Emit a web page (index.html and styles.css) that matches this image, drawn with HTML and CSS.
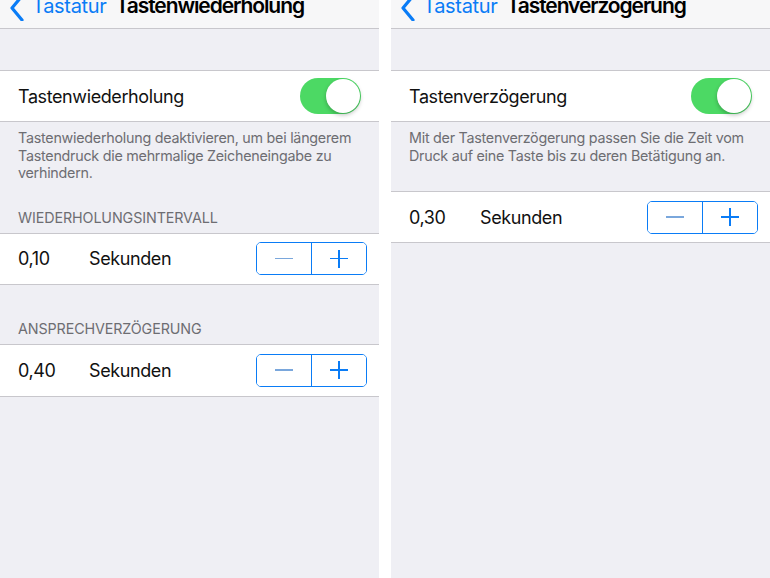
FILE: index.html
```html
<!DOCTYPE html>
<html lang="de">
<head>
  <meta charset="UTF-8" />
  <meta name="viewport" content="width=device-width, initial-scale=1" />
  <title>Tastatur</title>
  <link rel="stylesheet" href="styles.css">
</head>
<body>

  <!-- Bildschirm 1: Tastenwiederholung -->
  <div class="screen">
    <div class="nav">
      <a class="back" href="#">
        <svg class="chevron" width="16" height="26" viewBox="0 0 16 26">
          <path d="M13 1 L3 13 L13 25" fill="none" stroke="#0a7cf6" stroke-width="3.2" stroke-linecap="round" stroke-linejoin="round"/>
        </svg>
        <span>Tastatur</span>
      </a>
      <span class="title">Tastenwiederholung</span>
    </div>

    <div class="group first">
      <div class="row">
        <span class="label">Tastenwiederholung</span>
        <span class="switch on"><span class="knob"></span></span>
      </div>
    </div>
    <p class="footer">Tastenwiederholung deaktivieren, um bei längerem Tastendruck die mehrmalige Zeicheneingabe zu verhindern.</p>

    <div class="header">Wiederholungsintervall</div>
    <div class="group">
      <div class="row">
        <span class="value">0,10</span>
        <span class="unit">Sekunden</span>
        <span class="stepper">
          <button class="minus"><i></i></button>
          <button class="plus"><i></i></button>
        </span>
      </div>
    </div>

    <div class="header spaced">Ansprechverzögerung</div>
    <div class="group">
      <div class="row">
        <span class="value">0,40</span>
        <span class="unit">Sekunden</span>
        <span class="stepper">
          <button class="minus"><i></i></button>
          <button class="plus"><i></i></button>
        </span>
      </div>
    </div>
  </div>

  <!-- Bildschirm 2: Tastenverzögerung -->
  <div class="screen">
    <div class="nav">
      <a class="back" href="#">
        <svg class="chevron" width="16" height="26" viewBox="0 0 16 26">
          <path d="M13 1 L3 13 L13 25" fill="none" stroke="#0a7cf6" stroke-width="3.2" stroke-linecap="round" stroke-linejoin="round"/>
        </svg>
        <span>Tastatur</span>
      </a>
      <span class="title">Tastenverzögerung</span>
    </div>

    <div class="group first">
      <div class="row">
        <span class="label">Tastenverzögerung</span>
        <span class="switch on"><span class="knob"></span></span>
      </div>
    </div>
    <p class="footer">Mit der Tastenverzögerung passen Sie die Zeit vom Druck auf eine Taste bis zu deren Betätigung an.</p>

    <div class="group">
      <div class="row">
        <span class="value">0,30</span>
        <span class="unit">Sekunden</span>
        <span class="stepper">
          <button class="minus"><i></i></button>
          <button class="plus"><i></i></button>
        </span>
      </div>
    </div>
  </div>

</body>
</html>
```

FILE: styles.css
```css
/* zwei Einstellungs-Bildschirme nebeneinander */
body {
  margin: 0;
  background: #fff;
  display: flex;
  gap: 12px;
  font-family: Inter, "Liberation Sans", sans-serif;
  color: #111;
  overflow: hidden;
}

.screen {
  width: 379px;
  height: 578px;
  background: #efeff4;
  overflow: hidden;
}

/* Navigationsleiste, oben abgeschnitten */
.nav {
  height: 28px;
  background: #f7f7f8;
  border-bottom: 1px solid #c8c7cc;
  display: flex;
  align-items: flex-end;
  gap: 9px;
  padding-left: 9px;
  overflow: hidden;
}
.back {
  display: flex;
  align-items: flex-end;
  gap: 7px;
  color: #0a7cf6;
  text-decoration: none;
  font-size: 20px;
  line-height: 24px;
  letter-spacing: -0.3px;
  margin-bottom: 10px;
}
.back .chevron {
  margin-bottom: -3px;
}
.title {
  font-size: 21px;
  font-weight: 600;
  line-height: 24px;
  letter-spacing: -1.1px;
  margin-bottom: 10px;
  color: #000;
}

/* Gruppen und Zeilen */
.group {
  background: #fff;
  border-top: 1px solid #c8c7cc;
  border-bottom: 1px solid #c8c7cc;
}
.group.first {
  margin-top: 41px;
}
.row {
  height: 50px;
  display: flex;
  align-items: center;
  padding: 0 12px 0 18px;
  font-size: 18px;
  letter-spacing: -0.4px;
}
.label {
  flex: 1;
}
.value {
  width: 71px;
}
.unit {
  flex: 1;
}

.footer {
  margin: 0 0 27px;
  padding: 7px 18px 0;
  font-size: 14.3px;
  line-height: 17.5px;
  letter-spacing: -0.25px;
  color: #6d6d72;
}

.header {
  padding: 0 18px 6px;
  font-size: 14.3px;
  line-height: 18px;
  letter-spacing: -0.1px;
  color: #6d6d72;
  text-transform: uppercase;
}
.header.spaced {
  margin-top: 35px;
}
.header.spaced + .group .row {
  height: 51px;
}

/* Schalter */
.switch {
  width: 61px;
  height: 36px;
  border-radius: 18px;
  background: #4cd964;
  position: relative;
  margin-right: 6px;
}
.switch .knob {
  position: absolute;
  top: 1px;
  right: 1px;
  width: 34px;
  height: 34px;
  border-radius: 50%;
  background: #fff;
  box-shadow: 0 2px 4px rgba(0, 0, 0, 0.25);
}

/* Plus/Minus-Stepper */
.stepper {
  display: flex;
  width: 111px;
  height: 33px;
  border: 1px solid #0a7cf6;
  border-radius: 5px;
  box-sizing: border-box;
  overflow: hidden;
}
.stepper button {
  flex: 1;
  border: none;
  background: #fff;
  padding: 0;
  position: relative;
}
.stepper .minus {
  border-right: 1px solid #0a7cf6;
}
.stepper i {
  position: absolute;
  left: 50%;
  top: 50%;
  width: 18px;
  height: 1.6px;
  margin: -0.8px 0 0 -9px;
  background: #0a7cf6;
}
.stepper .minus i {
  background: #7aa7dc;
}
.stepper .plus i::after {
  content: "";
  position: absolute;
  left: 8.2px;
  top: -8.2px;
  width: 1.6px;
  height: 18px;
  background: #0a7cf6;
}
```
